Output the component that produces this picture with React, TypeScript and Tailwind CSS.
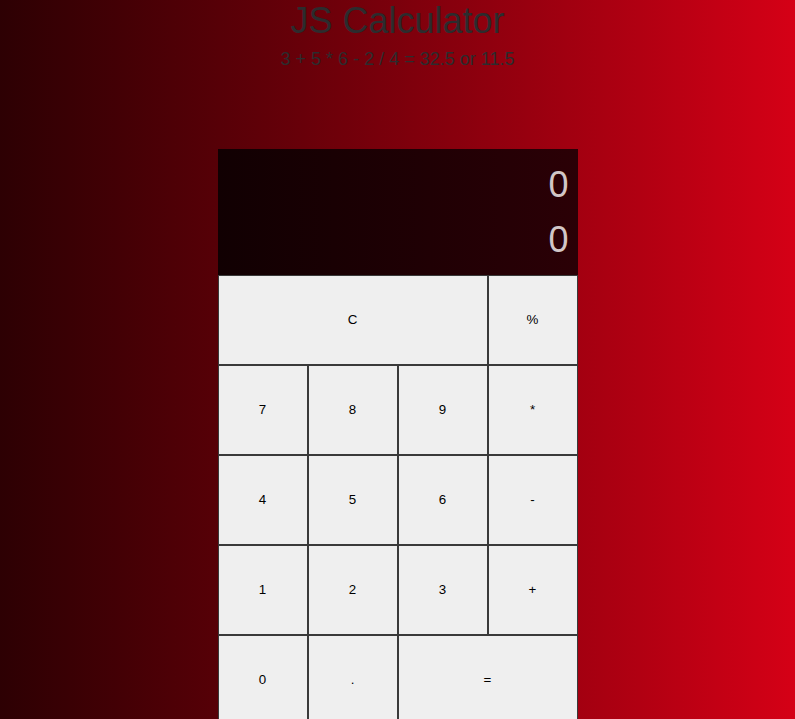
import React from 'react';

type Key = { label: string; span?: string };

const keys: Key[] = [
  { label: 'C', span: 'col-span-3' },
  { label: '%' },
  { label: '7' },
  { label: '8' },
  { label: '9' },
  { label: '*' },
  { label: '4' },
  { label: '5' },
  { label: '6' },
  { label: '-' },
  { label: '1' },
  { label: '2' },
  { label: '3' },
  { label: '+' },
  { label: '0' },
  { label: '.' },
  { label: '=', span: 'col-span-2' },
];

export default function App() {
  return (
    <div className="min-h-screen bg-gradient-to-r from-[#2d0003] to-[#d50016] font-['Liberation_Sans',Arial,sans-serif] text-[#2c2c2e]">
      <h1 className="text-center text-[36px] leading-[41px]">JS Calculator</h1>
      <p className="mt-2 text-center text-[18px] leading-[21px]">3 + 5 * 6 - 2 / 4 = 32.5 or 11.5</p>

      <div className="mx-auto mt-[79px] w-[360px]">
        <div className="h-[126px] bg-gradient-to-r from-[#110002] to-[#2b0006] pt-[8px] pr-[9px] text-right text-[36px] leading-[55px] text-[#d2c6c7]">
          <div>0</div>
          <div>0</div>
        </div>
        <div className="grid grid-cols-4">
          {keys.map((k) => (
            <button
              key={k.label}
              className={`h-[90px] border border-[#3a3a3a] bg-[#efefef] text-[13.33px] text-black ${k.span ?? ''}`}
            >
              {k.label}
            </button>
          ))}
        </div>
      </div>
    </div>
  );
}
